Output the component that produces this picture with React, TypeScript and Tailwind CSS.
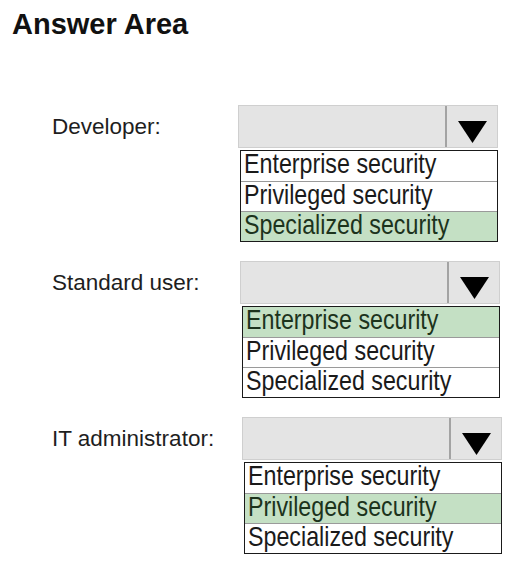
const options = ['Enterprise security', 'Privileged security', 'Specialized security'];

const rows = [
  { label: 'Developer:', selected: 2, shift: 'ml-0' },
  { label: 'Standard user:', selected: 0, shift: 'ml-[2px]' },
  { label: 'IT administrator:', selected: 1, shift: 'ml-[4px]' },
];

const Arrow = () => (
  <svg width="29" height="22" viewBox="0 0 29 22">
    <polygon points="0,0 29,0 14.5,22" fill="#000" />
  </svg>
);

const Dropdown = ({ selected, shift }: { selected: number; shift: string }) => (
  <div className={`w-[260px] ${shift}`}>
    {/* closed select */}
    <div className="flex h-[43px] border border-[#cfcfcf] bg-[#e4e4e4]">
      <div className="flex-1" />
      <div className="flex w-[52px] items-end justify-center border-l-2 border-[#a3a3a3] pb-[4px]">
        <Arrow />
      </div>
    </div>
    {/* option list */}
    <div className="ml-[2px] mt-[2px] border-[1.5px] border-[#1a1a1a] bg-white">
      {options.map((opt, i) => (
        <div
          key={opt}
          className={`h-[30px] whitespace-nowrap pl-[3px] ${i > 0 ? 'border-t border-[#9a9a9a]' : ''} ${
            i === selected ? 'bg-[#c4e0c4] text-[#1c331c]' : 'text-[#1a1a1a]'
          }`}
        >
          <span className="block w-[220px] origin-left scale-x-[0.83] text-[28px] leading-[26px]">{opt}</span>
        </div>
      ))}
    </div>
  </div>
);

export default function App() {
  return (
    <div className="min-h-[569px] w-[517px] bg-white pt-[10px] font-['Liberation_Sans',Arial,sans-serif]">
      <h1 className="pl-[12px] text-[29px] font-bold leading-[29px] text-[#111]">Answer Area</h1>

      <div className="mt-[66px] flex flex-col gap-[19px]">
        {rows.map((row) => (
          <div key={row.label} className="flex pl-[52px]">
            <div className="flex h-[43px] w-[186px] items-center text-[22.5px] text-[#1e1e1e]">{row.label}</div>
            <Dropdown selected={row.selected} shift={row.shift} />
          </div>
        ))}
      </div>
    </div>
  );
}
